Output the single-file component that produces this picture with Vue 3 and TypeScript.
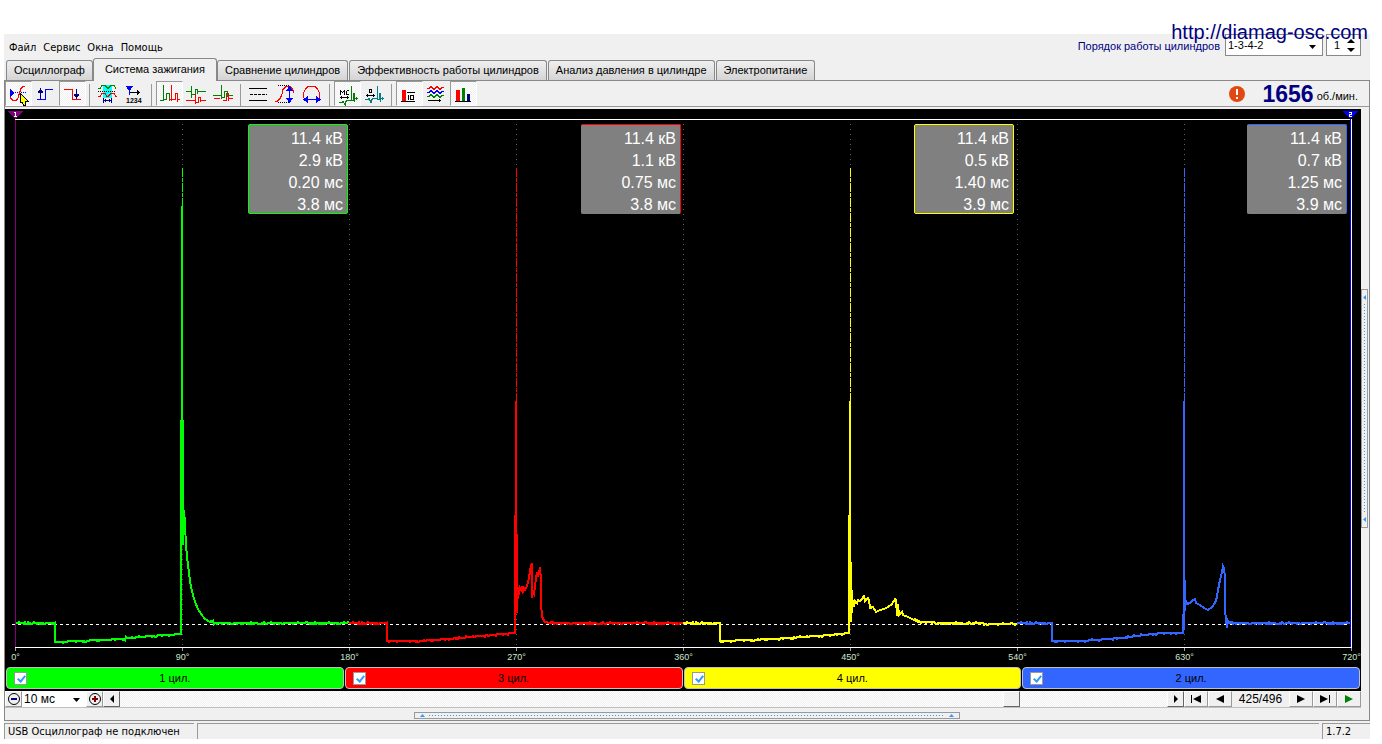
<script setup lang="ts">
import { computed, ref } from 'vue'

interface Cylinder {
  id: string
  name: string
  color: string
  readings: string[]
  points: [number, number][]
  spikeX: number
  solidFrom: number
}

const menu = ['Файл', 'Сервис', 'Окна', 'Помощь']
const tabs = [
  'Осциллограф',
  'Система зажигания',
  'Сравнение цилиндров',
  'Эффективность работы цилиндров',
  'Анализ давления в цилиндре',
  'Электропитание',
]
const activeTab = ref(1)
const order = ref('1-3-4-2')
const firstCylinder = ref(1)
const sweep = ref('10 мс')
const frame = ref(425)
const frameCount = 496
const shown = ref([true, true, true, true])

const cylinders: Cylinder[] = [
  {
    id: 'green',
    name: '1 цил.',
    color: '#00ff00',
    readings: ['11.4 кВ', '2.9 кВ', '0.20 мс', '3.8 мс'],
    spikeX: 182,
    solidFrom: 206,
    points: [
      [15, 623], [55, 623], [55, 642], [80, 641], [120, 639], [150, 636], [181, 634], [181, 421],
      [183, 421], [183, 545], [184, 510], [185, 524], [186, 546], [187, 556], [188, 566], [189, 572],
      [190, 581], [191, 587], [193, 595], [195, 602], [198, 609], [201, 614], [205, 619], [210, 622],
      [218, 623], [349, 623],
    ],
  },
  {
    id: 'red',
    name: '3 цил.',
    color: '#ff0000',
    readings: ['11.4 кВ', '1.1 кВ', '0.75 мс', '3.8 мс'],
    spikeX: 516,
    solidFrom: 401,
    points: [
      [349, 623], [387, 623], [387, 641], [420, 641], [460, 638], [490, 635], [515, 633], [515, 515],
      [517, 540], [517, 613], [517, 574], [518, 599], [518, 588], [519, 595], [520, 588], [521, 590],
      [522, 586], [523, 591], [524, 588], [525, 590], [526, 588], [528, 583], [529, 577], [530, 572],
      [531, 565], [532, 563], [532, 598], [533, 592], [534, 594], [535, 586], [536, 579], [537, 572],
      [538, 577], [539, 573], [540, 567], [541, 581], [541, 603], [542, 616], [543, 619], [545, 622],
      [550, 623], [683, 623],
    ],
  },
  {
    id: 'yellow',
    name: '4 цил.',
    color: '#ffff00',
    readings: ['11.4 кВ', '0.5 кВ', '1.40 мс', '3.9 мс'],
    spikeX: 850,
    solidFrom: 401,
    points: [
      [683, 623], [720, 623], [720, 641], [750, 640], [790, 638], [829, 635], [849, 633], [849, 515],
      [851, 577], [851, 622], [852, 590], [852, 613], [853, 600], [854, 607], [855, 601], [857, 603],
      [858, 600], [860, 601], [863, 598], [864, 595], [865, 601], [868, 598], [869, 600], [870, 608],
      [873, 607], [876, 612], [880, 610], [884, 609], [888, 607], [892, 604], [895, 599], [896, 600],
      [897, 616], [898, 604], [899, 615], [902, 612], [903, 615], [908, 617], [914, 620], [922, 622],
      [950, 623], [1017, 624],
    ],
  },
  {
    id: 'blue',
    name: '2 цил.',
    color: '#3366ff',
    readings: ['11.4 кВ', '0.7 кВ', '1.25 мс', '3.9 мс'],
    spikeX: 1184,
    solidFrom: 401,
    points: [
      [1017, 623], [1052, 623], [1052, 641], [1080, 641], [1120, 638], [1160, 633], [1183, 633],
      [1183, 615], [1184, 615], [1184, 530], [1184, 630], [1185, 580], [1185, 611], [1186, 600],
      [1187, 604], [1190, 603], [1193, 600], [1195, 599], [1196, 603], [1200, 605], [1204, 608],
      [1208, 610], [1212, 607], [1215, 603], [1217, 597], [1218, 590], [1220, 580], [1222, 572],
      [1223, 566], [1224, 568], [1225, 577], [1225, 610], [1227, 628], [1228, 621], [1229, 623],
      [1350, 623],
    ],
  },
]

// Adds a small repeatable ripple to the slow parts of a trace.
function trace(points: [number, number][]): string {
  let seed = 7
  const out: string[] = [`${points[0][0]},${points[0][1]}`]
  for (let i = 1; i < points.length; i++) {
    const [x0, y0] = points[i - 1]
    const [x1, y1] = points[i]
    if (x1 - x0 > 6) {
      for (let x = x0 + 1; x < x1; x++) {
        seed = (seed * 1103515245 + 12345) % 2147483648
        const r = seed / 2147483648
        const ripple = r > 0.92 ? -1 : r < 0.22 ? 1 : 0
        out.push(`${x},${Math.round(y0 + ((y1 - y0) * (x - x0)) / (x1 - x0)) + ripple}`)
      }
    }
    out.push(`${x1},${y1}`)
  }
  return out.join(' ')
}

const traces = computed(() => cylinders.map((c) => ({ ...c, line: trace(c.points) })))
const axis = [0, 90, 180, 270, 360, 450, 540, 630, 720].map((deg) => ({
  deg,
  x: 15.5 + Math.round((deg * 1336) / 720),
}))
</script>

<template>
  <div class="window">
    <a class="site" href="http://diamag-osc.com">http://diamag-osc.com</a>

    <header class="top">
      <nav class="menu">
        <button v-for="m in menu" :key="m" type="button">{{ m }}</button>
      </nav>
      <div class="order">
        <label for="order">Порядок работы цилиндров</label>
        <span class="field order-select">
          <select id="order" v-model="order">
            <option>1-3-4-2</option>
            <option>1-2-4-3</option>
          </select>
          <svg class="caret" width="7" height="4" viewBox="0 0 7 4"><path d="M0 0h7L3.500 4z" /></svg>
        </span>
        <span class="field spin">
          <input v-model="firstCylinder" type="text" aria-label="Первый цилиндр" />
          <span class="spin-buttons">
            <button type="button" aria-label="Больше" @click="firstCylinder++">
              <svg width="8" height="4" viewBox="0 0 8 4"><path d="M0 4h8L4 0z" /></svg>
            </button>
            <button type="button" aria-label="Меньше" @click="firstCylinder--">
              <svg width="8" height="4" viewBox="0 0 8 4"><path d="M0 0h8L4 4z" /></svg>
            </button>
          </span>
        </span>
      </div>
    </header>

    <div class="tabs" role="tablist">
      <button
        v-for="(t, i) in tabs"
        :key="t"
        type="button"
        role="tab"
        :aria-selected="i === activeTab"
        :class="{ active: i === activeTab }"
        @click="activeTab = i"
      >
        {{ t }}
      </button>
    </div>

    <main class="page">
      <div class="toolbar">
        <div class="group">
          <button type="button" class="tool pressed" aria-label="Курсор">
            <svg viewBox="0 0 26 24">
              <path class="blue-fill" d="M5 7v8l5-4z" />
              <path class="blue dots" d="M10 10.500h11" />
              <path class="red" d="M20 4.500h-2l-2 2-1 3-1 3-1 4-2 2H8l-3-3" />
              <path class="pointer" d="M15 11v10l2-1 2 4 2-1-1-4h3z" />
            </svg>
          </button>
          <button type="button" class="tool" aria-label="Фронт">
            <svg viewBox="0 0 26 24">
              <path class="blue" d="M5 17.500h8.500v-10H21" />
              <path class="navy" d="M8.500 17V8" />
              <path class="navy-fill" d="M5.500 11h6l-3-5z" />
            </svg>
          </button>
          <button type="button" class="tool pressed" aria-label="Спад">
            <svg viewBox="0 0 26 24">
              <path class="red" d="M5 7.500h8.500v10H22" />
              <path class="navy" d="M17.500 7v8" />
              <path class="navy-fill" d="M14.500 12h6l-3 5z" />
            </svg>
          </button>
        </div>
        <div class="group">
          <button type="button" class="tool" aria-label="Диапазон">
            <svg viewBox="0 0 26 24">
              <path class="cyan-fill" d="M9 3h9v13H9z" />
              <path class="green" d="M4 6.500h2l2-3h3l3 3 3-3h3l2 3" />
              <path class="black dots" d="M4 9.500h18" />
              <path class="red" d="M4 14.500h2l2-3h3l2 3h1l3-3h3l2 3h1" />
              <path class="navy" d="M9.500 16v5M17.500 16v5M10 18.500h8M11.500 17v3M15.500 17v3" />
            </svg>
          </button>
          <button type="button" class="tool" aria-label="Нумерация">
            <svg viewBox="0 0 26 24">
              <path class="blue-fill" d="M5 4h7l-3 5H8z" />
              <path class="blue" d="M8.500 8v5" />
              <path class="black" d="M9 10.500h10M16.500 8v5M17.500 9v3" />
              <text x="5" y="21" font-size="7">1234</text>
            </svg>
          </button>
        </div>
        <div class="group">
          <button type="button" class="tool pressed" aria-label="Последовательно">
            <svg viewBox="0 0 26 24">
              <path class="green" d="M4 18.500h3M7.500 3v16M7 17.500h3M10.500 12v6M10 11.500h3v7" />
              <path class="red" d="M13 17.500h2.500M15.500 3v16M16 17.500h3M19.500 12v6M19 11.500h2.500v6H24M21.500 17v3" />
            </svg>
          </button>
          <button type="button" class="tool" aria-label="Друг под другом">
            <svg viewBox="0 0 26 24">
              <path class="green" d="M3 9.500h5M8.500 4v12M9 12.500h3.500V7M12 7.500h2.500v4M14 9.500h9" />
              <path class="red" d="M3 18.500h9M12.500 12v10M13 20.500h2.500v-5M15 15.500h2.500v4M17 18.500h6" />
            </svg>
          </button>
          <button type="button" class="tool" aria-label="Наложение">
            <svg viewBox="0 0 26 24">
              <path class="red" d="M4 16.500h6M13 18.500h3.500V11M16 11.500h2.500v7M18 16.500h5" />
              <path class="green" d="M3 13.500h8M11.500 3v14M12 15.500h2.500v-6M14 9.500h3.500v5M17 13.500h6" />
            </svg>
          </button>
        </div>
        <div class="group">
          <button type="button" class="tool" aria-label="Линии">
            <svg viewBox="0 0 26 24">
              <path class="black" d="M4 6.500h18M4 18.500h18" />
              <path class="black dashes" d="M5 12.500h17" />
            </svg>
          </button>
          <button type="button" class="tool" aria-label="Масштаб по высоте">
            <svg viewBox="0 0 26 24">
              <path class="black dots" d="M6 3.500h12M6 20.500h12" />
              <path class="red" d="M3 19.500h2l3-3 2-4 1-5 3-3h4l2 2 2 4" />
              <path class="blue" d="M17.500 6v14" />
              <path class="blue-fill" d="M14 9h7l-3.500-5zM14 16h7l-3.500 5z" />
            </svg>
          </button>
          <button type="button" class="tool" aria-label="Масштаб по ширине">
            <svg viewBox="0 0 26 24">
              <path class="red" d="M5.500 19v-2l-1-2v-4l2-4 3-3h6l3 3 2 4v4l-1 2v2" />
              <path class="blue" d="M6 17.500h15" />
              <path class="blue-fill" d="M9 14v7l-5-3.500zM17 14v7l5-3.500z" />
            </svg>
          </button>
        </div>
        <div class="group">
          <button type="button" class="tool pressed" aria-label="Миллисекунды">
            <svg viewBox="0 0 26 24">
              <path class="black" d="M6.500 13V8M7 9.500h1M8.500 10v1M9 9.500h1M10.500 13V8M15 8.500h-2M12.500 9v4M13 12.500h2M6 15.500h9M7.500 14v3M13.500 14v3" />
              <path class="green" d="M17.500 4v14M5 20.500h3l1-1 2 3v-3l3-1h3M17 18.500h2.500v-7M19 11.500h1.500v8M20 16.500h4M22.500 15v3" />
            </svg>
          </button>
          <button type="button" class="tool" aria-label="Градусы">
            <svg viewBox="0 0 26 24">
              <path class="black" d="M8.500 7.500h2v3h-2zM5 13.500h9M6.500 12v3M12.500 12v3" />
              <path class="teal" d="M16.500 4v14M4 17.500h3l1-1 2 4v-3l3-1h3M16 17.500h2.500v-6M18 11.500h1.500v8M19 16.500h4M21.500 15v3" />
            </svg>
          </button>
        </div>
        <div class="group">
          <button type="button" class="tool pressed" aria-label="Среднее">
            <svg viewBox="0 0 26 24">
              <path class="red-fill" d="M6 8h4v11H6z" />
              <path class="black" d="M5 19.500h14M11 10.500h8M12.500 13v5M14.500 13.500h3v4h-3z" />
            </svg>
          </button>
          <button type="button" class="tool" aria-label="Тренды">
            <svg viewBox="0 0 26 24">
              <path class="red" d="M4 6.500h2l2-2 3 3 3-3 3 3 2-2h2" />
              <path class="blue" d="M4 10.500h2l2-2 3 3 3-3 3 3 2-2h2" />
              <path class="green" d="M4 14.500h2l2-2 3 3 3-3 3 3 2-2h2" />
              <path class="black" d="M5 18.500h13M16.500 17v3" />
            </svg>
          </button>
          <button type="button" class="tool pressed" aria-label="Гистограмма">
            <svg viewBox="0 0 26 24">
              <path class="red-fill" d="M6 8h4v11H6z" />
              <path class="green-fill" d="M12 6h3v13h-3z" />
              <path class="navy-fill" d="M17 12h3v7h-3z" />
              <path class="black" d="M5 19.500h16" />
            </svg>
          </button>
        </div>
        <div class="speed">
          <svg class="alert" width="16" height="16" viewBox="0 0 16 16">
            <circle cx="8" cy="8" r="8" fill="#e04a12" />
            <path d="M7 3h2v6H7zM7 11h2v2H7z" fill="#fff" />
          </svg>
          <strong>1656</strong>
          <span>об./мин.</span>
        </div>
      </div>

      <div class="work">
        <div class="scope">
          <div class="plot">
            <svg class="chart" viewBox="5 109 1356 558" shape-rendering="crispEdges">
              <path
                v-for="a in axis.slice(1, -1)"
                :key="a.deg"
                :d="`M${a.x} 124V647`"
                stroke="#606060"
                stroke-dasharray="1 4"
              />
              <path d="M12 624.500H1350" stroke="#fff" stroke-dasharray="3 3" />
              <template v-for="(t, i) in traces" :key="t.id">
                <g v-if="shown[i]" :stroke="t.color" fill="none">
                  <path :d="`M${t.spikeX + 0.5} 168V${t.solidFrom}`" stroke-dasharray="9 1 4 1" />
                  <path :d="`M${t.spikeX} ${t.solidFrom}V540`" stroke-width="2" />
                  <polyline :points="t.line" stroke-width="2" />
                </g>
              </template>
              <path d="M15 119.500H1352M15 647.500H1352M1351.500 119V648" stroke="#fff" fill="none" />
              <path d="M15.500 120V647" stroke="#800080" />
              <path d="M1350.500 117V647" stroke="#0000ff" />
              <path d="M8 111h15l-7 8h-1z" fill="#800080" />
              <path d="M1343 111h15l-7 8h-1z" fill="#0000ff" />
              <path
                d="M14 112.500h1M15.500 112v5M14 116.500h3M1349 112.500h3M1351.500 113v1M1349 114.500h3M1349.500 115v1M1349 116.500h3"
                stroke="#fff"
                fill="none"
              />
              <g v-for="a in axis" :key="a.deg">
                <path :d="`M${a.x} 648v3`" stroke="#a0a0a0" />
                <text class="degree" :x="a.x" y="660">{{ a.deg }}°</text>
              </g>
            </svg>
            <div class="readings">
              <ul v-for="c in cylinders" :key="c.id" :class="c.id">
                <li v-for="(r, i) in c.readings" :key="i">{{ r }}</li>
              </ul>
            </div>
          </div>

          <div class="legend">
            <label v-for="(c, i) in cylinders" :key="c.id" :class="c.id">
              <input v-model="shown[i]" type="checkbox" />
              <span>{{ c.name }}</span>
            </label>
          </div>

          <div class="transport">
            <button type="button" class="zoom" aria-label="Уменьшить">
              <svg width="14" height="14" viewBox="0 0 14 14">
                <circle cx="7" cy="7" r="5.500" fill="none" stroke="#000" />
                <path d="M4 6h6v2H4z" fill="#000080" />
              </svg>
            </button>
            <span class="sweep">
              <select v-model="sweep" aria-label="Развёртка">
                <option>10 мс</option>
                <option>20 мс</option>
              </select>
              <svg class="caret" width="7" height="4" viewBox="0 0 7 4"><path d="M0 0h7L3.500 4z" /></svg>
            </span>
            <button type="button" class="zoom" aria-label="Увеличить">
              <svg width="14" height="14" viewBox="0 0 14 14">
                <circle cx="7" cy="7" r="5.500" fill="none" stroke="#000" />
                <path d="M4 6h2V4h2v2h2v2H8v2H6V8H4z" fill="#800000" />
              </svg>
            </button>
            <button type="button" class="step" aria-label="Назад">
              <svg width="4" height="8" viewBox="0 0 4 8"><path d="M4 0v8L0 4z" /></svg>
            </button>
            <input v-model="frame" class="scroll" type="range" min="0" :max="frameCount" aria-label="Кадр" />
            <button type="button" class="step" aria-label="Вперёд">
              <svg width="4" height="8" viewBox="0 0 4 8"><path d="M0 0v8l4-4z" /></svg>
            </button>
            <button type="button" class="seek" aria-label="В начало" @click="frame = 0">
              <svg width="10" height="8" viewBox="0 0 10 8"><path d="M0 0h1v8H0zM2 4l8-4v8z" /></svg>
            </button>
            <button type="button" class="seek" aria-label="Предыдущий кадр" @click="frame--">
              <svg width="8" height="8" viewBox="0 0 8 8"><path d="M8 0v8L0 4z" /></svg>
            </button>
            <output>{{ frame }}/{{ frameCount }}</output>
            <button type="button" class="seek" aria-label="Следующий кадр" @click="frame++">
              <svg width="8" height="8" viewBox="0 0 8 8"><path d="M0 0v8l8-4z" /></svg>
            </button>
            <button type="button" class="seek" aria-label="В конец" @click="frame = frameCount">
              <svg width="10" height="8" viewBox="0 0 10 8"><path d="M9 0h1v8H9zM0 0v8l8-4z" /></svg>
            </button>
            <button type="button" class="seek play" aria-label="Пуск">
              <svg width="8" height="8" viewBox="0 0 8 8"><path d="M0 0v8l8-4z" /></svg>
            </button>
          </div>
        </div>
        <div class="gutter">
          <button type="button" class="splitter tall" aria-label="Боковая панель">
            <svg width="4" height="5" viewBox="0 0 4 5"><path d="M3 0v5L0 2.500z" /></svg>
            <i></i>
            <svg width="4" height="5" viewBox="0 0 4 5"><path d="M3 0v5L0 2.500z" /></svg>
          </button>
        </div>
      </div>

      <div class="drawer">
        <button type="button" class="splitter" aria-label="Нижняя панель">
          <svg width="5" height="3" viewBox="0 0 5 3"><path d="M0 3h5L2.500 0z" /></svg>
          <i></i>
          <svg width="5" height="3" viewBox="0 0 5 3"><path d="M0 3h5L2.500 0z" /></svg>
        </button>
      </div>
    </main>

    <footer class="status">
      <span class="state">USB Осциллограф не подключен</span>
      <span class="message"></span>
      <span class="version">1.7.2</span>
    </footer>
  </div>
</template>

<style>
body {
  background: #fff;
}
</style>

<style scoped>
* {
  box-sizing: border-box;
}
.window {
  position: relative;
  margin: 34px 12px 0 4px;
  background: #f0f0f0;
  color: #000;
  font: 11px/16px 'Liberation Sans', Arial, sans-serif;
}
button,
select,
input {
  margin: 0;
  padding: 0;
  border: 0;
  border-radius: 0;
  background: none;
  color: inherit;
  font: inherit;
}
select {
  appearance: none;
  outline: none;
}
svg {
  display: block;
}
.site {
  position: absolute;
  top: -14px;
  right: 2px;
  z-index: 2;
  color: #000080;
  font-size: 20px;
  line-height: 24px;
  text-decoration: none;
}
.top {
  display: flex;
  justify-content: space-between;
  height: 24px;
  padding: 0 9px 0 5px;
}
.menu {
  display: flex;
  align-items: center;
  gap: 7px;
  padding-top: 4px;
  font-family: 'DejaVu Sans Condensed', 'DejaVu Sans', sans-serif;
}
.order {
  display: flex;
  align-items: flex-start;
}
.order label {
  padding-right: 5px;
  color: #000080;
  line-height: 24px;
}
.field {
  position: relative;
  display: flex;
  height: 22px;
  border: 1px solid #888;
  background: #fff;
}
.order-select {
  width: 98px;
  margin-right: 3px;
}
.field select {
  width: 100%;
  padding-left: 2px;
}
.caret {
  position: absolute;
  right: 6px;
  top: 10px;
  pointer-events: none;
}
.spin {
  width: 35px;
}
.spin input {
  width: 20px;
  padding-left: 7px;
  outline: none;
}
.spin-buttons {
  display: grid;
  align-content: center;
  gap: 5px;
}
.tabs {
  display: flex;
  align-items: flex-end;
  gap: 1px;
  height: 22px;
  padding-left: 2px;
}
.tabs button {
  height: 20px;
  padding: 0 7px 1px;
  border: 1px solid #888;
  border-bottom: 0;
  border-radius: 3px 3px 0 0;
  background: linear-gradient(#f0f0f0, #d4d4d4);
  white-space: nowrap;
}
.tabs .active {
  position: relative;
  z-index: 1;
  height: 23px;
  margin: 0 -1px -1px;
  padding: 0 11px 2px;
  background: #f0f0f0;
}
.page {
  border: 1px solid #888;
}
.toolbar {
  display: flex;
  height: 26px;
  border-bottom: 1px solid #999;
}
.group {
  display: flex;
  padding-right: 8px;
  background: linear-gradient(#999, #999) right 4px top 3px / 1px 22px no-repeat;
}
.group:nth-last-child(2) {
  background: none;
}
.tool {
  width: 27px;
  height: 25px;
  border: 1px solid transparent;
}
.pressed {
  border-color: #999 #fff #fff #999;
  background: repeating-conic-gradient(#fff 0 25%, #f0f0f0 0 50%) 0 0 / 2px 2px;
}
.tool svg {
  width: 26px;
  height: 24px;
  margin: -1px;
  shape-rendering: crispEdges;
}
.tool path {
  fill: none;
}
.tool text {
  font-weight: bold;
}
.tool .red { stroke: #f00; }
.tool .green { stroke: #008000; }
.tool .blue { stroke: #00f; }
.tool .navy { stroke: #000080; }
.tool .teal { stroke: #008080; }
.tool .black { stroke: #000; }
.tool .red-fill { fill: #f00; }
.tool .green-fill { fill: #008000; }
.tool .blue-fill { fill: #00f; }
.tool .navy-fill { fill: #000080; }
.tool .cyan-fill { fill: #0ff; }
.tool .pointer { fill: #ff0; stroke: #000; }
.dots { stroke-dasharray: 1 1; }
.dashes { stroke-dasharray: 3 1; }
.speed {
  display: flex;
  align-items: center;
  margin-left: auto;
  padding-right: 11px;
}
.speed strong {
  padding: 0 3px 0 17px;
  color: #000080;
  font-size: 23px;
  line-height: 24px;
}
.speed span {
  padding-top: 4px;
}
.work {
  display: flex;
  padding-top: 2px;
}
.scope {
  flex: 1;
  min-width: 0;
  background: #000;
}
.plot {
  position: relative;
}
.chart {
  width: 100%;
  height: auto;
}
.degree {
  fill: #cfe8cf;
  font-size: 9px;
  text-anchor: middle;
}
.readings {
  position: absolute;
  top: 15px;
  right: 14px;
  left: 10px;
  display: grid;
  grid-template-columns: repeat(4, 1fr);
  justify-items: end;
}
.readings ul {
  width: 100px;
  height: 90px;
  margin: 0;
  padding: 3px 4px 0 0;
  border: 1px solid;
  border-radius: 2px;
  background: #808080;
  font-size: 16px;
  line-height: 22px;
  list-style: none;
  text-align: right;
}
.readings li {
  color: #fff;
}
.readings .green { border-color: #0f0; }
.readings .red { border-color: #f00 #f00 #808080 #808080; }
.readings .yellow { border-color: #ff0; }
.readings .blue { border-color: #36f #36f #808080 #808080; }
.legend {
  display: grid;
  grid-template-columns: repeat(4, 1fr);
  gap: 1px;
  padding: 0 1px 2px;
}
.legend label {
  display: grid;
  grid-template-columns: 1fr auto 1fr;
  align-items: center;
  height: 22px;
  padding: 0 7px;
  border: 1px solid #c0c0c0;
  border-radius: 4px;
}
.legend .green { background: #0f0; }
.legend .red { background: #f00; }
.legend .yellow { background: #ff0; }
.legend .blue { background: #36f; }
.legend input {
  width: 13px;
  height: 13px;
  border: 1px solid #999;
  appearance: none;
  background: #fff;
}
.legend input:checked::after {
  display: block;
  width: 3px;
  height: 6px;
  margin: 1px 0 0 4px;
  border: solid #39f;
  border-width: 0 2px 2px 0;
  content: '';
  transform: rotate(40deg);
}
.transport {
  display: flex;
  height: 17px;
  border-bottom: 1px solid #c0c0c0;
  background: #f0f0f0;
  font-size: 12px;
}
.transport button {
  display: grid;
  place-items: center;
  height: 16px;
  border: 1px solid;
  border-color: #fff #999 #999 #fff;
  background: #f0f0f0;
}
.transport .zoom {
  width: 17px;
}
.transport .step {
  width: 17px;
  border-color: #fff #666 #666 #fff;
}
.transport .seek {
  width: 24px;
}
.transport .play {
  fill: #008000;
}
.sweep {
  position: relative;
  width: 64px;
  background: #fff;
}
.sweep select {
  width: 100%;
  height: 16px;
  padding-left: 2px;
}
.sweep .caret {
  top: 7px;
}
.transport output {
  width: 57px;
  text-align: center;
}
.scroll {
  flex: 1;
  min-width: 0;
  height: 16px;
  appearance: none;
  background: repeating-conic-gradient(#fff 0 25%, #f0f0f0 0 50%) 0 0 / 2px 2px;
}
.scroll::-webkit-slider-thumb {
  width: 17px;
  height: 16px;
  border: 1px solid;
  border-color: #fff #666 #666 #fff;
  appearance: none;
  background: #f0f0f0;
}
.gutter {
  display: flex;
  align-items: center;
  width: 8px;
}
.splitter {
  display: flex;
  align-items: center;
  gap: 4px;
  width: 40%;
  height: 7px;
  padding: 0 5px;
  border: 1px solid #999;
  fill: #39f;
}
.splitter i {
  flex: 1;
  height: 1px;
  background: repeating-linear-gradient(90deg, #39f 0 1px, transparent 1px 3px);
}
.splitter.tall {
  flex-direction: column;
  width: 7px;
  height: 40%;
  padding: 5px 0;
}
.splitter.tall i {
  width: 1px;
  height: auto;
  background: repeating-linear-gradient(#39f 0 1px, transparent 1px 3px);
}
.drawer {
  display: flex;
  justify-content: center;
  height: 12px;
  padding-top: 4px;
}
.status {
  display: flex;
  gap: 3px;
  padding-top: 2px;
  font-family: 'DejaVu Sans Condensed', 'DejaVu Sans', sans-serif;
}
.status span {
  height: 16px;
  padding-left: 3px;
  border-top: 1px solid #999;
  border-left: 1px solid #999;
}
.state {
  width: 190px;
}
.message {
  flex: 1;
}
.version {
  width: 48px;
}
</style>
